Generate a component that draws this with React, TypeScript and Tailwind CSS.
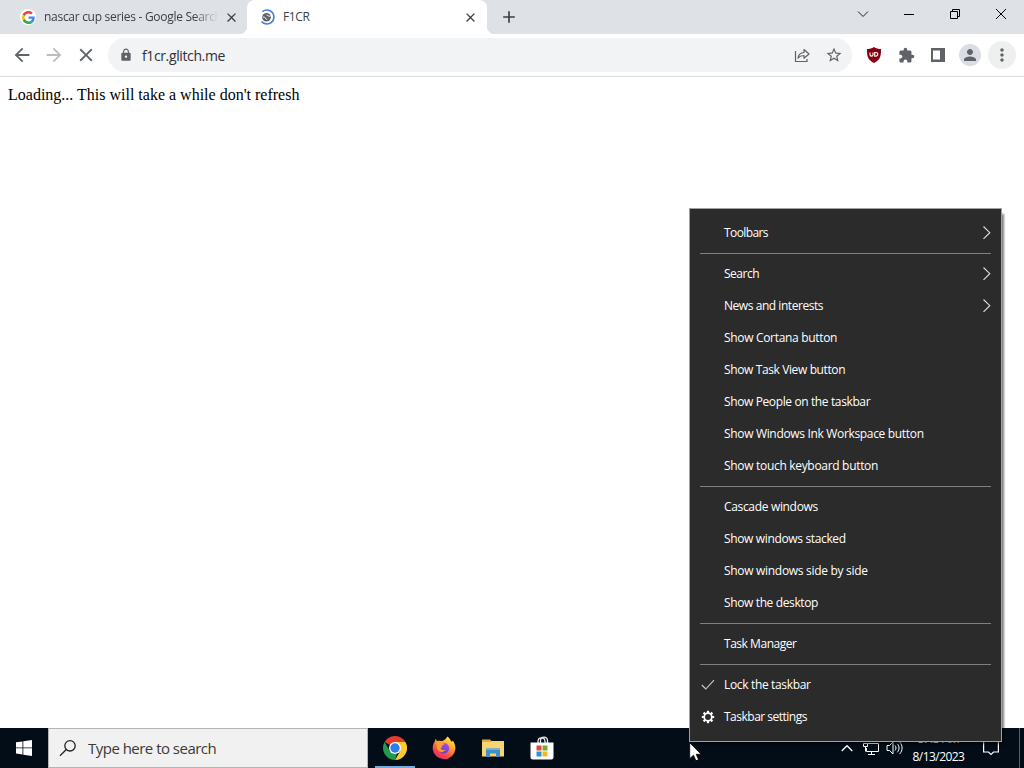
import type { ReactNode } from 'react';
import { MdArrowBack, MdArrowForward, MdClose, MdLock, MdStarOutline, MdExtension, MdPerson, MdMoreVert, MdAdd } from 'react-icons/md';

type MenuEntry = {
  label: string;
  tracking: string;
  submenu?: boolean;
  icon?: 'check' | 'gear';
};

const menuGroups: MenuEntry[][] = [
  [{ label: 'Toolbars', tracking: 'tracking-[-0.6px]', submenu: true }],
  [
    { label: 'Search', tracking: 'tracking-[-0.5px]', submenu: true },
    { label: 'News and interests', tracking: 'tracking-[-0.45px]', submenu: true },
    { label: 'Show Cortana button', tracking: 'tracking-[-0.32px]' },
    { label: 'Show Task View button', tracking: 'tracking-[-0.38px]' },
    { label: 'Show People on the taskbar', tracking: 'tracking-[-0.38px]' },
    { label: 'Show Windows Ink Workspace button', tracking: 'tracking-[-0.33px]' },
    { label: 'Show touch keyboard button', tracking: 'tracking-[-0.31px]' },
  ],
  [
    { label: 'Cascade windows', tracking: 'tracking-[-0.33px]' },
    { label: 'Show windows stacked', tracking: 'tracking-[-0.35px]' },
    { label: 'Show windows side by side', tracking: 'tracking-[-0.3px]' },
    { label: 'Show the desktop', tracking: 'tracking-[-0.37px]' },
  ],
  [{ label: 'Task Manager', tracking: 'tracking-[-0.46px]' }],
  [
    { label: 'Lock the taskbar', tracking: 'tracking-[-0.34px]', icon: 'check' },
    { label: 'Taskbar settings', tracking: 'tracking-[-0.5px]', icon: 'gear' },
  ],
];

function GoogleIcon() {
  return (
    <svg width="13" height="13" viewBox="0 0 48 48">
      <path fill="#EA4335" d="M24 9.5c3.54 0 6.71 1.22 9.21 3.6l6.85-6.85C35.9 2.38 30.47 0 24 0 14.62 0 6.51 5.38 2.56 13.22l7.98 6.19C12.43 13.72 17.74 9.5 24 9.5z" />
      <path fill="#4285F4" d="M46.98 24.55c0-1.57-.15-3.09-.38-4.55H24v9.02h12.94c-.58 2.96-2.26 5.48-4.78 7.18l7.73 6c4.51-4.18 7.09-10.36 7.09-17.65z" />
      <path fill="#FBBC05" d="M10.53 28.59c-.48-1.45-.76-2.99-.76-4.59s.27-3.14.76-4.59l-7.98-6.19C.92 16.46 0 20.12 0 24c0 3.88.92 7.54 2.56 10.78l7.97-6.19z" />
      <path fill="#34A853" d="M24 48c6.48 0 11.93-2.13 15.89-5.81l-7.73-6c-2.15 1.45-4.92 2.3-8.16 2.3-6.26 0-11.57-4.22-13.47-9.91l-7.98 6.19C6.51 42.62 14.62 48 24 48z" />
    </svg>
  );
}

function LoadingIcon() {
  return (
    <svg width="16" height="16" viewBox="0 0 16 16" fill="none">
      <path d="M3.5 2.6A7 7 0 1 1 2.6 12.5" stroke="#4a7fd6" strokeWidth="1.7" />
      <circle cx="7.5" cy="8.2" r="4.3" fill="#5f6368" />
      <path d="M3.9 8c1.5.2 2.5.4 2.6 1.3s1 1.1 1.7.9" stroke="#fff" />
      <path d="M7.5 5.8c.4.9 1.2.6 1.8 1.1s1.3.4 1.9.2" stroke="#fff" />
    </svg>
  );
}

function ChromeIcon() {
  return (
    <svg width="24" height="24" viewBox="0 0 24 24">
      <path fill="#e33b2e" d="M12 12 1.6 6A12 12 0 0 1 22.4 6z" />
      <path fill="#fcc934" d="M12 6h10.4A12 12 0 0 1 12 24l5.2-9z" />
      <path fill="#219b4f" d="M1.6 6 6.8 15l5.2 3 2-.4L12 24h-.4A12 12 0 0 1 1.6 6z" />
      <circle cx="12" cy="12" r="6" fill="#fff" />
      <circle cx="12" cy="12" r="4.7" fill="#2f7de9" />
    </svg>
  );
}

function FirefoxIcon() {
  return (
    <svg width="24" height="24" viewBox="0 0 24 24">
      <defs>
        <linearGradient id="fox" x1="0.85" y1="0.05" x2="0.3" y2="1">
          <stop offset="0" stopColor="#fff044" />
          <stop offset="0.4" stopColor="#ff9a2e" />
          <stop offset="0.75" stopColor="#f9434d" />
          <stop offset="1" stopColor="#e02b78" />
        </linearGradient>
        <linearGradient id="globe" x1="0.7" y1="0" x2="0.3" y2="1">
          <stop offset="0" stopColor="#a64bf0" />
          <stop offset="1" stopColor="#5a46c8" />
        </linearGradient>
      </defs>
      <path fill="url(#fox)" d="M15.5.6c2.1 1.6 3 3.2 3.5 4.8.9.1 1.5-.3 1.9-.7 1.7 2 2.6 5.2 2.5 8.1A11.4 11.4 0 0 1 .7 13C.5 9.5 1.6 6.7 2.8 5.4c.1-1 .5-1.7 1-2.3.3 1 .8 1.6 1.4 1.9 1.3-.5 2.6-.4 3.8.1 1.8-.2 3-.9 4-1.7.9-.7 1.8-1.6 2.5-2.8z" />
      <circle cx="12" cy="12.2" r="5.2" fill="url(#globe)" />
      <path fill="#ffa02e" d="M4.5 6.2c2.3-.9 4.4-.4 5.6 1 .7.1 1.8.1 2.4.2-.2 1.3-2 1.7-2.8 2.6.3.9-.2 2.1-1.3 2.7 1.3 1.6 3.7 1.7 5.2.8-1.5 3-5.9 3.4-8 .2C4.5 11.7 4 8.5 4.5 6.2z" />
    </svg>
  );
}

function ExplorerIcon() {
  return (
    <svg width="22" height="20" viewBox="0 0 22 20">
      <path fill="#e9a93a" d="M0 1.5h8L9.5 3H21v5H0z" />
      <path fill="#f9d571" d="M0 4h9l1.5-1H22v15.500H0z" />
      <path fill="#3f8fcb" d="M4 10.5h14V19h-4v-3.5H8V19H4z" />
      <path fill="#66b3e6" d="M4 10.5h14V12H4z" />
    </svg>
  );
}

function StoreIcon() {
  return (
    <svg width="24" height="25" viewBox="0 0 24 25">
      <path fill="none" stroke="#e8edf0" strokeWidth="1.3" d="M8 8V5.5C8 .7 15 .7 15 5.5V8M10.5 7V5c0-5 7-5 7-.5V7" />
      <path fill="#fff" d="M.5 6.5h23v15a2 2 0 0 1-2 2h-19a2 2 0 0 1-2-2z" />
      <path fill="#d8502f" d="M6.500 9.500h5v5h-5z" />
      <path fill="#7aab2f" d="M12.500 9.500h5v5h-5z" />
      <path fill="#2a95d0" d="M6.500 15.500h5v5h-5z" />
      <path fill="#f5b820" d="M12.500 15.500h5v5h-5z" />
    </svg>
  );
}

function GearIcon() {
  const teeth = [0, 45, 90, 135, 180, 225, 270, 315];
  return (
    <svg width="14" height="14" viewBox="-7 -7 14 14">
      <circle r="3.8" fill="none" stroke="#fff" strokeWidth="1.7" />
      {teeth.map(angle => (
        <rect key={angle} x="-1.1" y="-6.2" width="2.2" height="2.2" fill="#fff" transform={`rotate(${angle})`} />
      ))}
    </svg>
  );
}

function WindowButton({ children }: { children: ReactNode }) {
  return <button className="flex h-7 w-[46px] items-center justify-center">{children}</button>;
}

function ToolButton({ children }: { children: ReactNode }) {
  return <button className="flex size-8 shrink-0 items-center justify-center">{children}</button>;
}

function TabStrip() {
  return (
    <div className="flex h-[34px] shrink-0 bg-[#dee1e6] text-[12px] text-[#3c4043]">
      <div className="flex w-[247px] items-center pl-5">
        <span className="mr-2 flex size-4 items-center justify-center rounded-full bg-white">
          <GoogleIcon />
        </span>
        <span className="w-[174px] overflow-hidden whitespace-nowrap tracking-[-0.29px] [mask-image:linear-gradient(to_right,black_86%,transparent)]">
          nascar cup series - Google Search
        </span>
        <MdClose className="ml-[6px] size-[15px] shrink-0" />
      </div>
      <div className="relative flex w-[240px] items-center rounded-t-lg bg-white pl-3">
        <span className="absolute bottom-0 -left-2 size-2 bg-[radial-gradient(circle_at_0_0,transparent_8px,white_8.5px)]" />
        <span className="absolute -right-2 bottom-0 size-2 bg-[radial-gradient(circle_at_100%_0,transparent_8px,white_8.5px)]" />
        <LoadingIcon />
        <span className="ml-2 flex-1 tracking-[-0.4px]">F1CR</span>
        <MdClose className="mr-[9px] size-[15px]" />
      </div>
      <div className="flex w-11 items-center justify-center">
        <MdAdd className="size-5" />
      </div>
      <div className="ml-auto flex">
        <WindowButton>
          <svg width="12" height="8" viewBox="0 0 12 8" fill="none" stroke="#222">
            <path d="m1 1.500 5 5 5-5" />
          </svg>
        </WindowButton>
        <WindowButton>
          <span className="h-px w-[10px] bg-black" />
        </WindowButton>
        <WindowButton>
          <svg width="10" height="10" viewBox="0 0 10 10" fill="none" stroke="#000">
            <path d="M.5 2.500h7v7h-7zM2.500 2.500v-2h7v7h-2" />
          </svg>
        </WindowButton>
        <WindowButton>
          <svg width="12" height="12" viewBox="0 0 12 12" stroke="#000">
            <path d="m1 1 10 10M11 1 1 11" />
          </svg>
        </WindowButton>
      </div>
    </div>
  );
}

function Toolbar() {
  return (
    <div className="flex h-[43px] shrink-0 items-center border-b border-[#dadce0] bg-white pl-1.5 text-[#5f6368]">
      <ToolButton><MdArrowBack className="size-[22px]" /></ToolButton>
      <ToolButton><MdArrowForward className="size-[22px] text-[#babcbe]" /></ToolButton>
      <ToolButton><MdClose className="size-[22px]" /></ToolButton>
      <div className="ml-1.5 flex h-[34px] w-[744px] items-center rounded-full bg-[#f1f3f4] pr-0.5 pl-[11px]">
        <MdLock className="size-[14px]" />
        <span className="ml-[9px] flex-1 text-[14px] tracking-[-0.38px] text-[#303134]">f1cr.glitch.me</span>
        <ToolButton>
          <svg width="16" height="16" viewBox="0 0 16 16" fill="none" stroke="currentColor" strokeWidth="1.2">
            <path d="M1.500 4v10.500h11.500V12" />
            <path d="M4 11c.5-3.500 2.500-5.300 6-5.500V2.500L15 7l-5 4.300V8.500C7.500 8.500 5.500 9.300 4 11z" strokeLinejoin="round" />
          </svg>
        </ToolButton>
        <ToolButton><MdStarOutline className="size-[18px]" /></ToolButton>
      </div>
      <div className="ml-1.5 flex">
        <ToolButton>
          <svg width="16" height="16" viewBox="0 0 16 16">
            <path fill="#86000f" d="M8 0c2 1.400 4.500 2 7 2 0 7-.3 10.500-7 14C1.300 12.500 1 9 1 2c2.500 0 5-.6 7-2z" />
            <path d="M4 5.500v2.300c0 1.800 3 1.800 3 0V5.500M8.700 5.500v3.700h.8c3 0 3-3.700 0-3.700z" fill="none" stroke="#fff" strokeWidth="1.1" />
          </svg>
        </ToolButton>
        <ToolButton><MdExtension className="size-[17px]" /></ToolButton>
        <ToolButton>
          <svg width="14" height="14" viewBox="0 0 14 14">
            <path fill="currentColor" fillRule="evenodd" d="M0 0h14v14H0zM2 2.500v9h7v-9z" />
          </svg>
        </ToolButton>
        <ToolButton>
          <span className="flex size-[22px] items-center justify-center rounded-full bg-[#dadde3]">
            <MdPerson className="size-[18px]" />
          </span>
        </ToolButton>
        <ToolButton>
          <span className="flex size-7 items-center justify-center rounded-full bg-[#eeefef]">
            <MdMoreVert className="size-5" />
          </span>
        </ToolButton>
      </div>
    </div>
  );
}

function TaskbarMenu() {
  return (
    <div className="absolute top-[208px] left-[689px] w-[313px] border border-[#a0a0a0] bg-[#2b2b2b] py-2 text-[12px] text-white shadow-[4px_4px_2px_-2px_rgba(0,0,0,0.5)]">
      {menuGroups.map((group, index) => (
        <div key={index}>
          {index > 0 && <div className="mx-[10px] my-1 h-px bg-[#808080]" />}
          {group.map(item => (
            <div key={item.label} className="flex h-8 items-center pr-[10px]">
              <span className="flex w-[34px] items-center justify-center pl-0.5">
                {item.icon === 'check' && (
                  <svg width="14" height="12" viewBox="0 0 14 12" fill="none" stroke="#ccc" strokeWidth="1.1">
                    <path d="m.8 6 4 4L13 1.200" />
                  </svg>
                )}
                {item.icon === 'gear' && <GearIcon />}
              </span>
              <span className={`flex-1 whitespace-nowrap ${item.tracking}`}>{item.label}</span>
              {item.submenu && (
                <svg width="9" height="14" viewBox="0 0 9 14" fill="none" stroke="#e0e0e0" strokeWidth="1.1">
                  <path d="m1.500.500 6.300 6.200-6.300 6.200" />
                </svg>
              )}
            </div>
          ))}
        </div>
      ))}
    </div>
  );
}

function Taskbar() {
  return (
    <div className="flex h-10 shrink-0 bg-[#020d18] text-white">
      <div className="flex w-12 items-center justify-center">
        <svg width="16" height="16" viewBox="0 0 16 16" fill="#fff">
          <path d="M0 2.300 6.500 1.400v6.100H0zM7.300 1.300 16 0v7.500H7.300zM0 8.300h6.500v6.200L0 13.600zM7.300 8.300H16V16l-8.700-1.300z" />
        </svg>
      </div>
      <div className="flex w-80 items-center border border-[#b4b4b4] bg-[#f1f1f1] pl-[10px] text-[#3a3a3a]">
        <svg width="18" height="18" viewBox="0 0 18 18" fill="none" stroke="#222" strokeWidth="1.3">
          <circle cx="11" cy="6.8" r="5.2" />
          <path d="M7.300 10.500 1 16.800" />
        </svg>
        <span className="ml-[11px] text-[15px] tracking-[-0.52px]">Type here to search</span>
      </div>
      <div className="ml-0.5 flex">
        <div className="relative flex w-[49px] items-center justify-center">
          <ChromeIcon />
          <span className="absolute bottom-0 left-[5px] h-0.5 w-10 bg-[#76a9dc]" />
        </div>
        <div className="flex w-[49px] items-center justify-center"><FirefoxIcon /></div>
        <div className="flex w-[49px] items-center justify-center"><ExplorerIcon /></div>
        <div className="flex w-[49px] items-center justify-center"><StoreIcon /></div>
      </div>
      <div className="ml-auto flex items-center">
        <div className="flex w-6 justify-center">
          <svg width="12" height="8" viewBox="0 0 12 8" fill="none" stroke="#fff" strokeWidth="1.3">
            <path d="m.7 7 5.300-5.300L11.300 7" />
          </svg>
        </div>
        <div className="flex w-6 justify-center">
          <svg width="16" height="16" viewBox="0 0 16 16" fill="none" stroke="#fff">
            <path d="M5 3.500h10.500v8H3.500V8M8.500 11.500v3M5 14.500h7M.5 3.500h4v3h-4zM2.500 6.500v5" />
          </svg>
        </div>
        <div className="flex w-6 justify-center">
          <svg width="18" height="16" viewBox="0 0 18 16" fill="none" stroke="#fff">
            <path d="M1 5.500h2.500L7 2v12l-3.500-3.500H1zM9 5.500c1.300 1.500 1.300 3.500 0 5M11.300 3.800c2.300 2.500 2.300 6 0 8.500M13.600 2c3.300 3.500 3.300 8.500 0 12" />
          </svg>
        </div>
        <div className="flex w-[63px] flex-col items-center text-[12px] leading-4 tracking-[-0.55px]">
          <span>5:43 AM</span>
          <span className="pt-0.5">8/13/2023</span>
        </div>
        <div className="flex w-[42px] justify-center">
          <svg width="16" height="16" viewBox="0 0 16 16" fill="none" stroke="#fff" strokeWidth="1.2">
            <path d="M.6 1v11h4.900L8 14.500l2.500-2.500h4.900V1z" />
          </svg>
        </div>
        <div className="ml-[7px] h-10 w-[5px] border-l border-[#55606a]" />
      </div>
    </div>
  );
}

export default function App() {
  return (
    <div className="relative flex h-screen w-screen flex-col overflow-hidden bg-white font-['Open_Sans',sans-serif]">
      <TabStrip />
      <Toolbar />
      <main className="flex-1 p-2 font-['Liberation_Serif',serif] text-[16px] leading-[19px] text-black">
        Loading... This will take a while don't refresh
      </main>
      <Taskbar />
      <TaskbarMenu />
      <svg className="absolute top-[742px] left-[689px]" width="13" height="20" viewBox="0 0 13 20">
        <path fill="#fff" stroke="#000" strokeWidth="0.8" d="M.7.7v16l3.800-3.500 2.400 5.600 2.700-1.200-2.400-5.300h5z" />
      </svg>
    </div>
  );
}
